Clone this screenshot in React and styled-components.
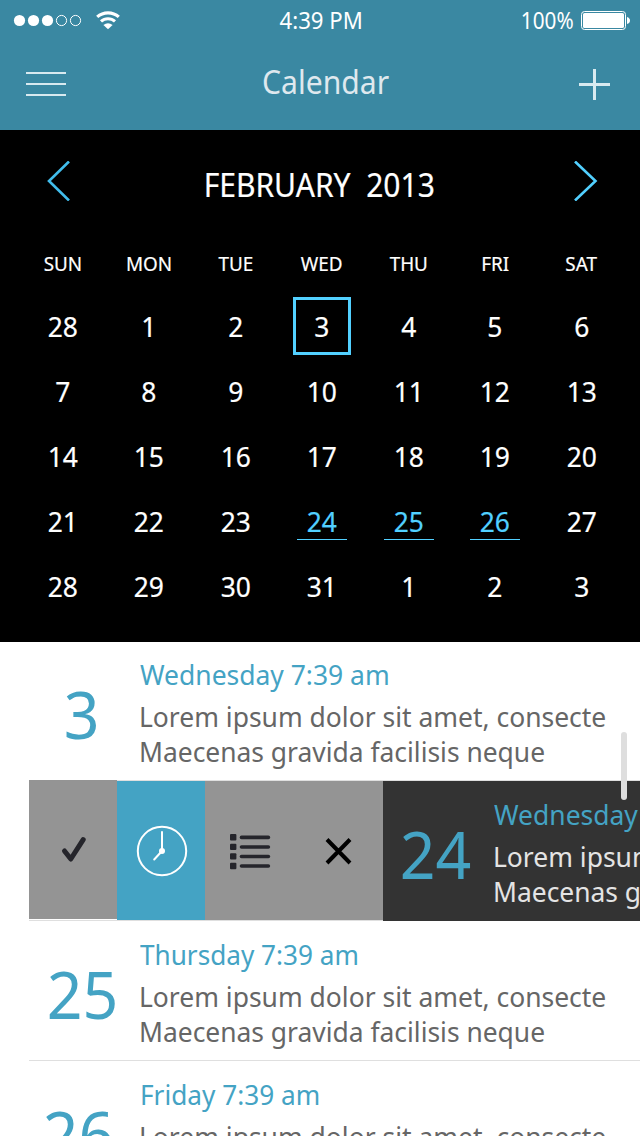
import React from 'react';
import styled, { createGlobalStyle } from 'styled-components';

const accent = '#44a3c4';
const bright = '#52d0ff';

const GlobalStyle = createGlobalStyle`
  * { box-sizing: border-box; }
  body { margin: 0; background: #fff; font-family: "Noto Sans", "Open Sans", sans-serif; }
  svg { display: block; }
`;

const Screen = styled.main`
  position: relative;
  width: 640px;
  height: 1136px;
  overflow: hidden;
  background: #fff;
`;

const Label = styled.span`
  display: inline-block;
  white-space: pre;
  transform: scaleX(${(p) => p.$fit || 0.945});
  transform-origin: ${(p) => p.$origin || 'center'};
`;

const Header = styled.header`
  height: 130px;
  background: #3a88a2;
  color: #fff;
`;

const StatusBar = styled.div`
  display: grid;
  grid-template-columns: 1fr auto 1fr;
  align-items: center;
  height: 41px;
  padding: 0 10px 0 13px;
  font-size: 23px;
  line-height: 41px;
`;

const StatusGroup = styled.div`
  display: flex;
  align-items: center;
  gap: ${(p) => p.$gap}px;
  justify-content: ${(p) => (p.$end ? 'flex-end' : 'flex-start')};
`;

const NavBar = styled.nav`
  display: flex;
  justify-content: space-between;
  align-items: flex-start;
  padding: 28px 30px 0 26px;
`;

const NavTitle = styled.h1`
  margin: -9px 0 0;
  padding-left: 7px;
  font-size: 32px;
  line-height: 44px;
  font-weight: 400;
  color: #dfe8ee;
`;

const IconButton = styled.button`
  border: 0;
  padding: 0;
  margin-top: ${(p) => p.$top || 0}px;
  background: none;
`;

const Calendar = styled.section`
  height: 512px;
  padding-top: 31px;
  background: #000;
  color: #fff;
  -webkit-text-stroke: 0.2px;
`;

const MonthBar = styled.div`
  display: flex;
  justify-content: space-between;
  height: 87px;
  padding: 0 42px 0 47px;
`;

const MonthName = styled.h2`
  margin: 4px 0 0;
  padding-right: 6px;
  font-size: 32px;
  line-height: 40px;
  font-weight: 400;
`;

const Grid = styled.div`
  display: grid;
  grid-template-columns: repeat(7, 86.5px);
  padding-left: 19.4px;
  text-align: center;
`;

const WeekDay = styled.div`
  height: 45px;
  font-size: 20.5px;
  line-height: 30px;
`;

const DateCell = styled.div`
  height: 65px;
  padding-top: 4px;
`;

const DateBox = styled.div`
  width: ${(p) => (p.$kind === 'selected' ? 58 : 50)}px;
  height: ${(p) => (p.$kind === 'marked' ? 48 : 58)}px;
  margin: 0 auto;
  border: 0 solid ${bright};
  border-width: ${(p) => (p.$kind === 'selected' ? '3px' : p.$kind === 'marked' ? '3px 0 1px' : '3px 0 0')};
  border-top-color: ${(p) => (p.$kind === 'selected' ? bright : 'transparent')};
  color: ${(p) => (p.$kind === 'marked' ? bright : '#fff')};
  font-size: 27.5px;
  line-height: 53px;
`;

const EventList = styled.section`
  padding-left: 29px;
`;

const EventRow = styled.article`
  display: flex;
  height: ${(p) => (p.$first ? 139 : 140)}px;
  padding-top: ${(p) => (p.$first ? 14 : 15)}px;
  border-bottom: 1px solid #dfdfdf;
`;

const SwipedRow = styled.article`
  display: flex;
  align-items: flex-start;
  height: 140px;
  border-bottom: 1px solid #dfdfdf;
`;

const Action = styled.button`
  display: flex;
  flex: none;
  align-items: center;
  justify-content: center;
  width: ${(p) => p.$width}px;
  height: 139px;
  margin: ${(p) => (p.$raised ? '-1px' : 0)} 0 0;
  padding: 0;
  border: 0;
  background: ${(p) => (p.$active ? accent : '#949494')};
`;

const DarkPane = styled.div`
  display: flex;
  flex: none;
  width: 640px;
  height: 140px;
  padding-top: 15px;
  background: #333;
`;

const DayNumber = styled.div`
  flex: none;
  width: 109px;
  padding: 18px ${(p) => p.$inset || 4}px 0 0;
  color: ${accent};
  font-size: 65.5px;
  line-height: 80px;
  text-align: center;
`;

const EventTitle = styled.h3`
  margin: 0 0 7px 2px;
  color: ${accent};
  font-size: 28px;
  line-height: 36px;
  font-weight: 400;
`;

const EventText = styled.p`
  margin: 0 0 0 1px;
  color: ${(p) => (p.$light ? '#e4e4e4' : '#666')};
  font-size: 28px;
  line-height: 35px;
`;

const ScrollThumb = styled.div`
  position: absolute;
  left: 621px;
  top: 732px;
  width: 6px;
  height: 68px;
  border-radius: 3px;
  background: #dedede;
`;

const Signal = () => (
  <svg width="70" height="13" viewBox="0 0 70 13">
    {[0, 1, 2, 3, 4].map((i) => (
      <circle key={i} cx={6.5 + i * 14} cy="6.5" r={i < 3 ? 5.6 : 5.1}
        fill={i < 3 ? '#fff' : 'none'} stroke={i < 3 ? 'none' : '#fff'} />
    ))}
  </svg>
);

const Wifi = () => (
  <svg width="24" height="19" viewBox="0 0 24 19" fill="none" stroke="#fff">
    <path d="M1.2 5.9C7.3.4 16.7.4 22.8 5.9" strokeWidth="3.2" />
    <path d="M5 10.4C9 6.7 15 6.7 19 10.4" strokeWidth="3" />
    <path d="M12 18.2L7.4 14Q12 10.6 16.6 14Z" fill="#fff" stroke="none" />
  </svg>
);

const Battery = () => (
  <svg width="49" height="19" viewBox="0 0 49 19">
    <rect x=".5" y=".5" width="44" height="18" rx="3" fill="none" stroke="#fff" />
    <rect x="2" y="2" width="41" height="15" rx="1.6" fill="#fff" />
    <path d="M46 6q3 1 3 3.5T46 13z" fill="#fff" />
  </svg>
);

const MenuIcon = () => (
  <svg width="40" height="24" viewBox="0 0 40 24" stroke="#d8eaf0" strokeWidth="2">
    <path d="M0 1H40M0 12H40M0 23H40" />
  </svg>
);

const PlusIcon = () => (
  <svg width="31" height="31" viewBox="0 0 31 31" stroke="#d8eaf0" strokeWidth="3">
    <path d="M0 15.5H31M15.5 0V31" />
  </svg>
);

const Chevron = ({ right }) => (
  <svg width="24" height="40" viewBox="0 0 24 40" fill="none" stroke={right ? bright : '#41bdec'} strokeWidth="2.6">
    <path d={right ? 'M1 0.5L21.5 20L1 39.5' : 'M22 0.5L2 20L22 39.5'} />
  </svg>
);

const CheckIcon = () => (
  <svg width="88" height="139" viewBox="0 0 88 139" fill="none" stroke="#25252b" strokeWidth="5" strokeLinecap="round" strokeLinejoin="round">
    <path d="M35.5 71L41.8 79L54.2 59.6" />
  </svg>
);

const ClockIcon = () => (
  <svg width="88" height="139" viewBox="0 0 88 139" fill="none" stroke="#fff" strokeWidth="2">
    <circle cx="45" cy="70" r="24.2" />
    <path d="M45 51V70L37.2 78.5" strokeLinecap="round" />
    <circle cx="45" cy="70" r="3" fill="#fff" stroke="none" />
  </svg>
);

const ListIcon = () => (
  <svg width="89" height="139" viewBox="0 0 89 139" fill="#25252b">
    {[0, 1, 2, 3].map((i) => (
      <g key={i}>
        <rect x="25" y={53.1 + i * 9.55} width="6.4" height="6.4" rx="1" />
        <rect x="34.7" y={54.6 + i * 9.55} width="30.5" height="3.6" rx="1.8" />
      </g>
    ))}
  </svg>
);

const CrossIcon = () => (
  <svg width="89" height="139" viewBox="0 0 89 139" stroke="#000" strokeWidth="4">
    <path d="M33 58.5L56 82M56 58.5L33 82" />
  </svg>
);

const weekDays = ['SUN', 'MON', 'TUE', 'WED', 'THU', 'FRI', 'SAT'];
const dates = [28, ...Array.from({ length: 31 }, (_, i) => i + 1), 1, 2, 3];
const kindOf = (i) => (i === 3 ? 'selected' : i >= 24 && i <= 26 ? 'marked' : 'plain');

const EventBody = ({ title, titleFit, light }) => (
  <div>
    <EventTitle><Label $fit={titleFit} $origin="left">{title}</Label></EventTitle>
    <EventText $light={light}>
      <Label $origin="left">Lorem ipsum dolor sit amet, consecte</Label><br />
      <Label $fit={0.943} $origin="left">Maecenas gravida facilisis neque</Label>
    </EventText>
  </div>
);

const EventContent = ({ day, inset, title, titleFit, light }) => (
  <>
    <DayNumber $inset={inset}><Label $fit={0.955}>{day}</Label></DayNumber>
    <EventBody title={title} titleFit={titleFit} light={light} />
  </>
);

export default function App() {
  return (
    <Screen>
      <GlobalStyle />
      <Header>
        <StatusBar>
          <StatusGroup $gap={13}><Signal /><Wifi /></StatusGroup>
          <Label $fit={0.965}>4:39 PM</Label>
          <StatusGroup $gap={7} $end>
            <Label $fit={0.9} $origin="right">100%</Label>
            <Battery />
          </StatusGroup>
        </StatusBar>
        <NavBar>
          <IconButton $top={3} aria-label="Menu"><MenuIcon /></IconButton>
          <NavTitle><Label $fit={0.94}>Calendar</Label></NavTitle>
          <IconButton aria-label="Add"><PlusIcon /></IconButton>
        </NavBar>
      </Header>
      <Calendar>
        <MonthBar>
          <Chevron />
          <MonthName><Label $fit={0.938}>{'FEBRUARY  2013'}</Label></MonthName>
          <Chevron right />
        </MonthBar>
        <Grid>
          {weekDays.map((d) => <WeekDay key={d}><Label $fit={0.92}>{d}</Label></WeekDay>)}
          {dates.map((n, i) => (
            <DateCell key={i}>
              <DateBox $kind={kindOf(i)}><Label $fit={0.96}>{n}</Label></DateBox>
            </DateCell>
          ))}
        </Grid>
      </Calendar>
      <EventList>
        <EventRow $first><EventContent day="3" title="Wednesday 7:39 am" /></EventRow>
        <SwipedRow>
          <Action $width={88} $raised aria-label="Done"><CheckIcon /></Action>
          <Action $width={88} $active aria-label="Snooze"><ClockIcon /></Action>
          <Action $width={89} aria-label="Details"><ListIcon /></Action>
          <Action $width={89} aria-label="Delete"><CrossIcon /></Action>
          <DarkPane><EventContent day="24" title="Wednesday 7:39 am" light /></DarkPane>
        </SwipedRow>
        <EventRow><EventContent day="25" inset={3} title="Thursday 7:39 am" titleFit={0.934} /></EventRow>
        <EventRow><EventContent day="26" inset={10} title="Friday 7:39 am" titleFit={0.936} /></EventRow>
      </EventList>
      <ScrollThumb />
    </Screen>
  );
}
